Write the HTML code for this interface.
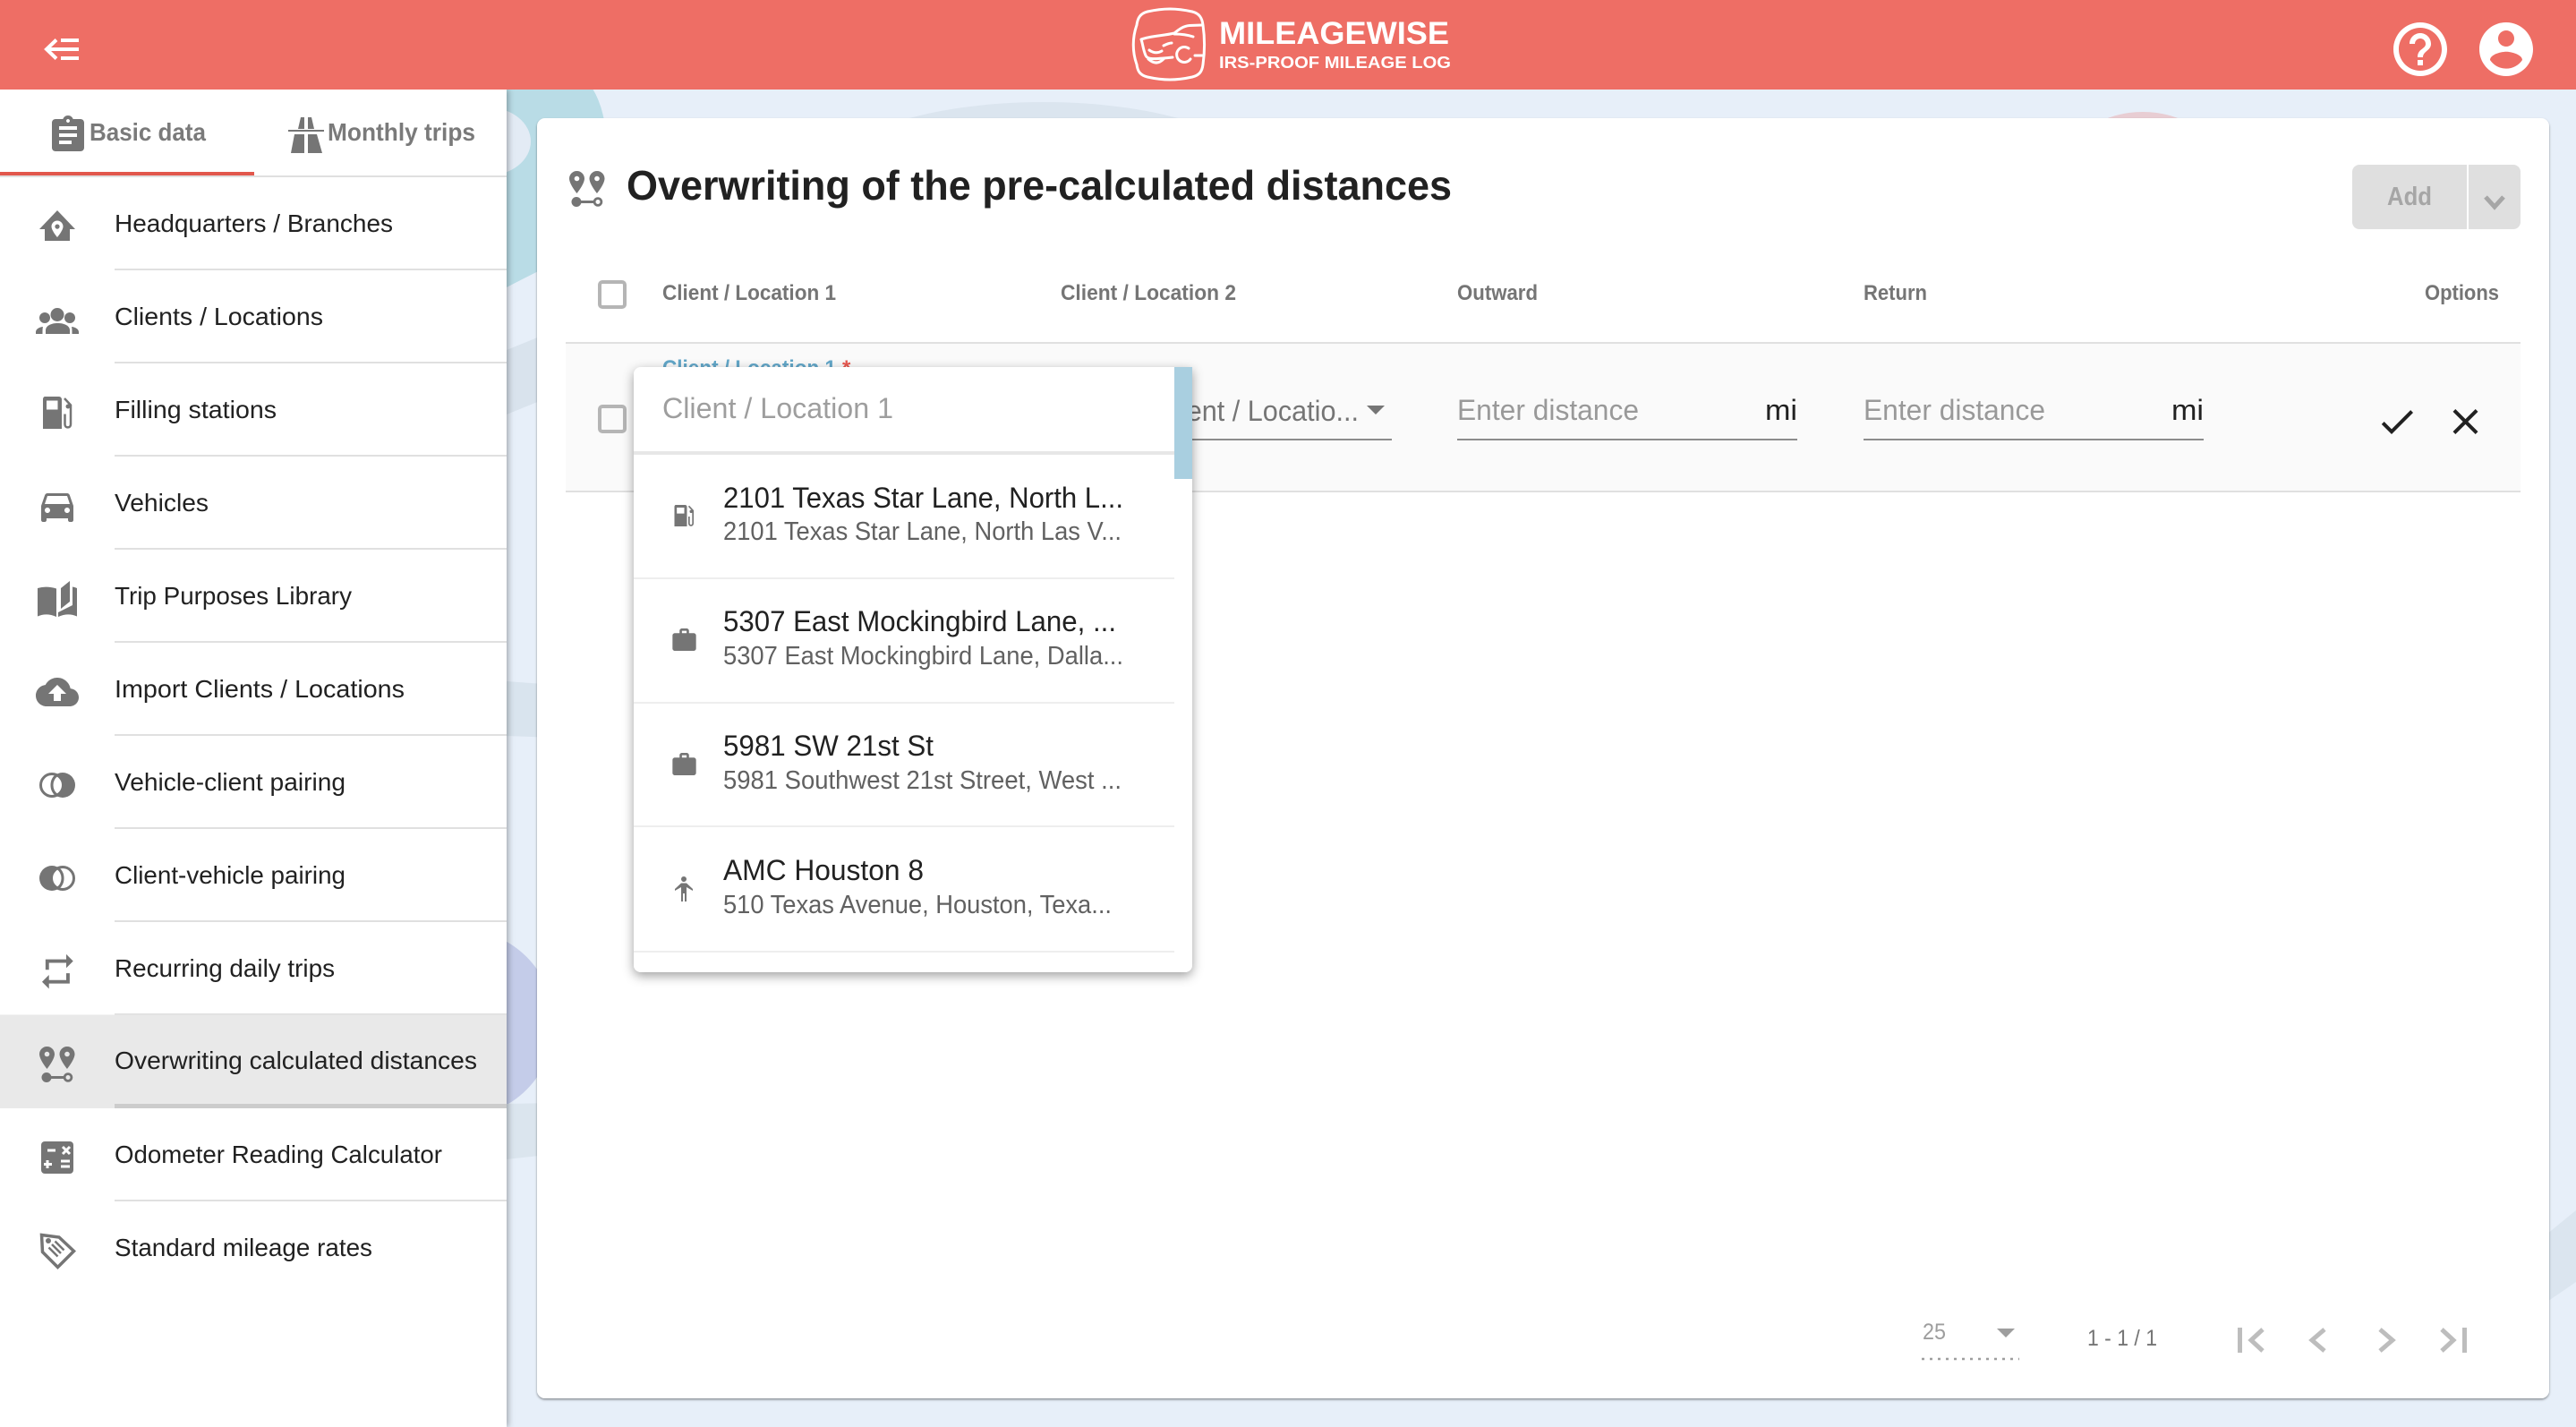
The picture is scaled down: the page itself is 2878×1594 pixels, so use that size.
<!DOCTYPE html>
<html lang="en">
<head>
<meta charset="utf-8">
<title>Overwriting of the pre-calculated distances</title>
<style>
html,body{margin:0;padding:0;background:#e7eff9;width:2878px;height:1594px;overflow:hidden}
svg{display:block}
text{font-family:"Liberation Sans",Arial,sans-serif;}
.nav{font-size:28px;fill:#212121}
.th{font-size:24px;font-weight:700;fill:#757575}
.tab{font-size:28px;font-weight:700;fill:#7a7a7a}
.t1{font-size:32px;fill:#212121}
.t2{font-size:29px;fill:#616161}
.ph{font-size:32px;fill:#999}
.ic{fill:#757575}
</style>
</head>
<body>
<svg xmlns="http://www.w3.org/2000/svg" width="2878" height="1594" viewBox="0 0 2878 1594">
<defs>
<filter id="sb" x="-5%" y="-5%" width="115%" height="110%"><feDropShadow dx="2" dy="0" stdDeviation="3.5" flood-color="#000" flood-opacity=".3"/></filter>
<filter id="cd" x="-2%" y="-2%" width="104%" height="104%"><feDropShadow dx="0" dy="1.5" stdDeviation="1.4" flood-color="#000" flood-opacity=".42"/></filter>
<filter id="dd" x="-8%" y="-8%" width="116%" height="116%"><feDropShadow dx="0" dy="4" stdDeviation="6" flood-color="#000" flood-opacity=".38"/></filter>
<symbol id="pins" viewBox="0 0 40 40" width="40" height="40" overflow="visible">
  <path fill-rule="evenodd" d="M8.5 0C3.8 0 0 3.8 0 8.5 0 14.5 8.5 25 8.5 25S17 14.5 17 8.5C17 3.8 13.2 0 8.5 0ZM8.5 5.7a2.800 2.800 0 1 1-.01 0Z"/>
  <path fill-rule="evenodd" d="M31 0C26.300 0 22.500 3.800 22.500 8.500 22.500 14.500 31 25 31 25S39.500 14.500 39.500 8.500C39.500 3.800 35.700 0 31 0ZM31 5.700a2.800 2.800 0 1 1-.01 0Z"/>
  <circle cx="8" cy="34.500" r="5.500"/>
  <path d="M8 34.500H29" stroke="#757575" stroke-width="3" fill="none"/>
  <circle cx="32" cy="34.500" r="3.900" fill="none" stroke="#757575" stroke-width="2.800"/>
</symbol>
<symbol id="gas" viewBox="0 0 33 36" overflow="visible">
  <path fill-rule="evenodd" d="M2 0H18C19.500 0 21 1.500 21 3V36H0V3C0 1.500 1 0 2 0ZM4 4.500V14.500H16.500V4.500Z"/>
  <path d="M24 2L31 9.500V31C31 35.500 24.500 35.500 24.500 31V19.500" fill="none" stroke="#757575" stroke-width="2.500"/>
  <circle cx="28" cy="11" r="2.500"/>
</symbol>
<symbol id="work" viewBox="2 2 20 19" overflow="visible">
  <path d="M20 6h-4V4c0-1.110-.89-2-2-2h-4c-1.110 0-2 .89-2 2v2H4c-1.110 0-1.990.89-1.990 2L2 19c0 1.110.89 2 2 2h16c1.110 0 2-.89 2-2V8c0-1.110-.89-2-2-2zm-6 0h-4V4h4v2z"/>
</symbol>
</defs>

<!-- background -->
<rect width="2878" height="1594" fill="#e7eff9"/>
<path d="M566 99H662Q672 115 676 140V272Q640 282 566 321Z" fill="#b9dce6"/>
<ellipse cx="545" cy="158" rx="48" ry="38" fill="#e3ebf5"/>
<path d="M566 391L620 369V441L566 463Z" fill="#d9e3ed"/>
<path d="M566 761L620 765V824L566 822Z" fill="#d9e4ee"/>
<circle cx="514" cy="1143" r="105" fill="#c4cce9"/>
<path d="M566 1233L620 1232V1289L566 1295Z" fill="#dbe5ee"/>
<ellipse cx="1166" cy="200" rx="245" ry="86" fill="#dbe5ef"/>
<ellipse cx="2394" cy="180" rx="80" ry="55" fill="#e8cdd3"/>
<path d="M2840 1383L2878 1352V1432L2840 1458Z" fill="#dbe5ef"/>

<!-- card -->
<rect x="600" y="132" width="2248" height="1430" rx="9" fill="#fff" filter="url(#cd)"/>

<!-- title -->
<use href="#pins" x="636" y="191" class="ic"/>
<text x="700" y="223" font-size="46" font-weight="700" fill="#212121" textLength="922" lengthAdjust="spacingAndGlyphs">Overwriting of the pre-calculated distances</text>

<!-- add button -->
<path d="M2636 184H2756V256H2636A8 8 0 0 1 2628 248V192A8 8 0 0 1 2636 184Z" fill="#dfdfdf"/>
<path d="M2758 184H2808A8 8 0 0 1 2816 192V248A8 8 0 0 1 2808 256H2758Z" fill="#dfdfdf"/>
<text x="2667" y="229" font-size="29" font-weight="700" fill="#a6a6a6" textLength="50" lengthAdjust="spacingAndGlyphs">Add</text>
<path d="M2777 220L2787 231L2797 220" fill="none" stroke="#a6a6a6" stroke-width="5"/>

<!-- table head -->
<rect x="670" y="315" width="28" height="28" rx="3" fill="none" stroke="#b5b5b5" stroke-width="4"/>
<text class="th" x="740" y="335" textLength="194" lengthAdjust="spacingAndGlyphs">Client / Location 1</text>
<text class="th" x="1185" y="335" textLength="196" lengthAdjust="spacingAndGlyphs">Client / Location 2</text>
<text class="th" x="1628" y="335" textLength="90" lengthAdjust="spacingAndGlyphs">Outward</text>
<text class="th" x="2082" y="335" textLength="71" lengthAdjust="spacingAndGlyphs">Return</text>
<text class="th" x="2709" y="335" textLength="83" lengthAdjust="spacingAndGlyphs">Options</text>
<rect x="632" y="382" width="2184" height="2" fill="#e0e0e0"/>

<!-- edit row -->
<rect x="632" y="384" width="2184" height="164" fill="#fafafa"/>
<rect x="632" y="548" width="2184" height="2" fill="#e0e0e0"/>
<rect x="670" y="454" width="28" height="28" rx="3" fill="none" stroke="#b5b5b5" stroke-width="4"/>
<text x="740" y="419" font-size="24" font-weight="700" fill="#62a6c8" textLength="194" lengthAdjust="spacingAndGlyphs">Client / Location 1</text>
<text x="941" y="419" font-size="24" font-weight="700" fill="#e8584f">*</text>
<text x="1290" y="470" font-size="32" fill="#757575" textLength="228" lengthAdjust="spacingAndGlyphs">Client / Locatio...</text>
<path d="M1527 453H1547L1537 463Z" fill="#757575"/>
<rect x="1185" y="490" width="370" height="2" fill="#8c8c8c"/>
<text class="ph" x="1628" y="469" textLength="203" lengthAdjust="spacingAndGlyphs">Enter distance</text>
<text class="t1" x="1972" y="469" textLength="36" lengthAdjust="spacingAndGlyphs">mi</text>
<rect x="1628" y="490" width="380" height="2" fill="#8c8c8c"/>
<text class="ph" x="2082" y="469" textLength="203" lengthAdjust="spacingAndGlyphs">Enter distance</text>
<text class="t1" x="2426" y="469" textLength="36" lengthAdjust="spacingAndGlyphs">mi</text>
<rect x="2082" y="490" width="380" height="2" fill="#8c8c8c"/>
<path transform="translate(2654 447) scale(2)" fill="#212121" d="M9 16.170L4.830 12l-1.420 1.410L9 19 21 7l-1.410-1.410z"/>
<path transform="translate(2730.500 447) scale(2)" fill="#212121" d="M19 6.410L17.590 5 12 10.590 6.410 5 5 6.410 10.590 12 5 17.590 6.410 19 12 13.410 17.590 19 19 17.590 13.410 12z"/>

<!-- pagination -->
<text x="2148" y="1496" font-size="25" fill="#9e9e9e" textLength="26" lengthAdjust="spacingAndGlyphs">25</text>
<path d="M2231 1484H2251L2241 1494Z" fill="#9e9e9e"/>
<path d="M2147 1518H2256" stroke="#9e9e9e" stroke-width="2.500" stroke-dasharray="3 6" fill="none"/>
<text x="2332" y="1503" font-size="25" fill="#757575" textLength="78" lengthAdjust="spacingAndGlyphs">1 - 1 / 1</text>
<g fill="none" stroke="#bdbdbd" stroke-width="5">
  <path d="M2502.500 1483V1511M2528 1485L2515 1497L2528 1509"/>
  <path d="M2597 1485L2583 1497L2597 1509"/>
  <path d="M2659 1485L2673 1497L2659 1509"/>
  <path d="M2728 1485L2741 1497L2728 1509M2753.500 1483V1511"/>
</g>

<!-- dropdown -->
<g filter="url(#dd)"><path d="M716 410H1332V1078A8 8 0 0 1 1324 1086H716A8 8 0 0 1 708 1078V418A8 8 0 0 1 716 410Z" fill="#fff"/></g>
<rect x="1312" y="410" width="20" height="125" fill="#a9cfe0"/>
<text x="740" y="467" font-size="32" fill="#9e9e9e" textLength="258" lengthAdjust="spacingAndGlyphs">Client / Location 1</text>
<rect x="708" y="504" width="604" height="4" fill="#e7e7e7"/>

<use href="#gas" x="753" y="564" width="23" height="24" class="ic"/>
<text class="t1" x="808" y="567" textLength="447" lengthAdjust="spacingAndGlyphs">2101 Texas Star Lane, North L...</text>
<text class="t2" x="808" y="603" textLength="445" lengthAdjust="spacingAndGlyphs">2101 Texas Star Lane, North Las V...</text>
<rect x="708" y="645" width="604" height="2" fill="#eee"/>

<use href="#work" x="751" y="702" width="27" height="25" class="ic"/>
<text class="t1" x="808" y="705" textLength="439" lengthAdjust="spacingAndGlyphs">5307 East Mockingbird Lane, ...</text>
<text class="t2" x="808" y="742" textLength="447" lengthAdjust="spacingAndGlyphs">5307 East Mockingbird Lane, Dalla...</text>
<rect x="708" y="784" width="604" height="2" fill="#eee"/>

<use href="#work" x="751" y="841" width="27" height="25" class="ic"/>
<text class="t1" x="808" y="844" textLength="235" lengthAdjust="spacingAndGlyphs">5981 SW 21st St</text>
<text class="t2" x="808" y="881" textLength="445" lengthAdjust="spacingAndGlyphs">5981 Southwest 21st Street, West ...</text>
<rect x="708" y="922" width="604" height="2" fill="#eee"/>

<g class="ic"><circle cx="764" cy="982" r="3"/><path d="M761 986.500H767L774 993V995L767 991V1007H765V998H763V1007H761V991L754 995V993Z"/></g>
<text class="t1" x="808" y="983" textLength="224" lengthAdjust="spacingAndGlyphs">AMC Houston 8</text>
<text class="t2" x="808" y="1020" textLength="434" lengthAdjust="spacingAndGlyphs">510 Texas Avenue, Houston, Texa...</text>
<rect x="708" y="1062" width="604" height="2" fill="#eee"/>

<!-- sidebar -->
<rect x="0" y="100" width="566" height="1494" fill="#fff" filter="url(#sb)"/>
<rect x="0" y="192" width="284" height="4" fill="#e2574c"/>
<rect x="0" y="196" width="566" height="2" fill="#e0e0e0"/>
<path class="ic" transform="translate(52 127) scale(2)" d="M19 3h-4.180C14.400 1.840 13.300 1 12 1c-1.300 0-2.400.84-2.820 2H5c-1.100 0-2 .9-2 2v14c0 1.100.9 2 2 2h14c1.100 0 2-.9 2-2V5c0-1.100-.9-2-2-2zm-7 0c.55 0 1 .45 1 1s-.45 1-1 1-1-.45-1-1 .45-1 1-1zm2 14H7v-2h7v2zm3-4H7v-2h10v2zm0-4H7V7h10v2z"/>
<text class="tab" x="100" y="157" textLength="130" lengthAdjust="spacingAndGlyphs">Basic data</text>
<path class="ic" d="M336 131H340V144H333ZM344 131H348L351 144H344ZM322 145H362V147H322ZM329 150H340V171H325ZM344 150H354L360 171H344Z"/>
<text class="tab" x="366" y="157" textLength="165" lengthAdjust="spacingAndGlyphs">Monthly trips</text>

<g fill="#e0e0e0">
  <rect x="128" y="300" width="438" height="2"/>
  <rect x="128" y="404" width="438" height="2"/>
  <rect x="128" y="508" width="438" height="2"/>
  <rect x="128" y="612" width="438" height="2"/>
  <rect x="128" y="716" width="438" height="2"/>
  <rect x="128" y="820" width="438" height="2"/>
  <rect x="128" y="924" width="438" height="2"/>
  <rect x="128" y="1028" width="438" height="2"/>
  <rect x="128" y="1132" width="438" height="2"/>
  <rect x="128" y="1340" width="438" height="2"/>
</g>
<rect x="0" y="1133.500" width="566" height="104.500" fill="#e9e9e9"/>
<rect x="128" y="1233" width="438" height="5" fill="#ccc"/>

<!-- nav icons -->
<path class="ic" fill-rule="evenodd" d="M64 235L84 256H78V269H50V256H44ZM64 246.500C60.500 246.500 57.500 249.400 57.500 253 57.500 257.500 64 265 64 265S70.500 257.500 70.500 253C70.500 249.400 67.500 246.500 64 246.500ZM64 250.500A2.600 2.600 0 1 1 63.990 250.500Z"/>
<g class="ic">
  <circle cx="64" cy="351.500" r="7.500"/><circle cx="50" cy="355" r="6"/><circle cx="78" cy="355" r="6"/>
  <path d="M51 373V369C51 364 57 361 64.500 361S78 364 78 369V373Z"/>
  <path d="M40 373V371C40 368 43 365.500 48 365 47.500 367 47.500 369 47.500 373Z"/>
  <path d="M88 373V371C88 368 85 365.500 80 365 80.500 367 80.500 369 80.500 373Z"/>
</g>
<use href="#gas" x="48" y="443" width="33" height="36" class="ic"/>
<path class="ic" transform="translate(40 541) scale(2)" d="M18.920 6.010C18.720 5.420 18.160 5 17.500 5h-11c-.66 0-1.210.42-1.420 1.010L3 12v8c0 .55.45 1 1 1h1c.55 0 1-.45 1-1v-1h12v1c0 .55.45 1 1 1h1c.55 0 1-.45 1-1v-8l-2.080-5.990zM6.500 16c-.83 0-1.500-.67-1.500-1.500S5.670 13 6.500 13s1.500.67 1.500 1.500S7.330 16 6.500 16zm11 0c-.83 0-1.500-.67-1.500-1.500s.67-1.500 1.500-1.500 1.500.67 1.500 1.500-.67 1.500-1.500 1.500zM5 11l1.500-4.500h11L19 11H5z"/>
<path class="ic" d="M42 657Q52 654 63 657.500V689Q52 684 42 688.500ZM68 657L78 649V672L68 680ZM81 655.500Q84 656 86 657V688.500Q76 684 65 689V684Q73 680 81 676Z"/>
<path class="ic" transform="translate(40 749) scale(2)" d="M19.350 10.040C18.670 6.590 15.640 4 12 4 9.110 4 6.600 5.640 5.350 8.040 2.340 8.360 0 10.910 0 14c0 3.310 2.690 6 6 6h13c2.760 0 5-2.240 5-5 0-2.640-2.050-4.780-4.650-4.960zM14 13v4h-4v-4H7l5-5 5 5h-3z"/>
<g>
  <circle cx="70" cy="877" r="14" fill="#757575"/>
  <circle cx="58" cy="877" r="12.500" fill="#fff" stroke="#757575" stroke-width="3"/>
  <path d="M64 865.500A14 14 0 0 0 64 888.500" fill="none" stroke="#757575" stroke-width="3"/>
</g>
<g>
  <circle cx="58" cy="981" r="14" fill="#757575"/>
  <circle cx="70" cy="981" r="12.500" fill="#fff" stroke="#757575" stroke-width="3"/>
  <path d="M64 969.500A14 14 0 0 1 64 992.500" fill="none" stroke="#757575" stroke-width="3"/>
</g>
<path class="ic" transform="translate(41.200 1062) scale(1.930)" d="M7 7h10v3l4-4-4-4v3H5v6h2V7zm10 10H7v-3l-4 4 4 4v-3h12v-6h-2v4z"/>
<use href="#pins" x="44" y="1169" class="ic"/>
<rect x="46" y="1275" width="36" height="36" rx="4" class="ic"/>
<g stroke="#fff" stroke-width="3" fill="none">
  <path d="M53 1285H62M70 1281L78 1289M78 1281L70 1289M53 1296V1305M49 1300.500H58M68 1297H78M68 1303H78"/>
</g>
<g fill="none" stroke="#757575" stroke-width="3.500">
  <path d="M46.500 1379.500L66 1382L82.500 1397.500L64.500 1415.500L47.500 1398.500Z"/>
  <path d="M54.500 1393.500L64.500 1403.500M58 1390L68 1400M61.500 1386.500L71.500 1396.500" stroke-width="2.500"/>
</g>
<circle class="ic" cx="54" cy="1386" r="3"/>

<!-- nav text -->
<text class="nav" x="128" y="259" textLength="311" lengthAdjust="spacingAndGlyphs">Headquarters / Branches</text>
<text class="nav" x="128" y="363" textLength="233" lengthAdjust="spacingAndGlyphs">Clients / Locations</text>
<text class="nav" x="128" y="467" textLength="181" lengthAdjust="spacingAndGlyphs">Filling stations</text>
<text class="nav" x="128" y="571" textLength="105" lengthAdjust="spacingAndGlyphs">Vehicles</text>
<text class="nav" x="128" y="675" textLength="265" lengthAdjust="spacingAndGlyphs">Trip Purposes Library</text>
<text class="nav" x="128" y="779" textLength="324" lengthAdjust="spacingAndGlyphs">Import Clients / Locations</text>
<text class="nav" x="128" y="883" textLength="258" lengthAdjust="spacingAndGlyphs">Vehicle-client pairing</text>
<text class="nav" x="128" y="987" textLength="258" lengthAdjust="spacingAndGlyphs">Client-vehicle pairing</text>
<text class="nav" x="128" y="1091" textLength="246" lengthAdjust="spacingAndGlyphs">Recurring daily trips</text>
<text class="nav" x="128" y="1194" textLength="405" lengthAdjust="spacingAndGlyphs">Overwriting calculated distances</text>
<text class="nav" x="128" y="1299" textLength="366" lengthAdjust="spacingAndGlyphs">Odometer Reading Calculator</text>
<text class="nav" x="128" y="1403" textLength="288" lengthAdjust="spacingAndGlyphs">Standard mileage rates</text>

<!-- header -->
<rect x="0" y="0" width="2878" height="100" fill="#ee6e65"/>
<g fill="none" stroke="#fff" stroke-width="4">
  <path d="M63 44.500L52 55L63 65.500M52 55H88M68 45H88M68 65H88"/>
</g>
<g fill="none" stroke="#fff" stroke-width="3" stroke-linecap="round" stroke-linejoin="round">
  <path d="M1282 13C1300 9 1314 9 1332 13 1340 15 1343 20 1344 28 1346 42 1346 58 1344 72 1343 80 1340 84 1332 86 1314 90 1300 90 1282 86 1274 84 1271 80 1270 72 1265 58 1265 42 1270 28 1271 20 1274 15 1282 13Z"/>
  <path d="M1275 44C1285 40 1300 40 1312 37 1317 33 1322 29 1329 28.500L1343 28"/>
  <path d="M1312 38Q1324 38 1333 41"/>
  <path d="M1275 44C1277 50 1277 55 1280 62 1282 67 1290 66 1310 64"/>
  <path d="M1284 56Q1291 61 1298 57M1300 51Q1306 48 1309 48"/>
  <path d="M1283 66Q1292 74 1300 66"/>
  <path d="M1328 54A8.500 8.500 0 1 0 1330 66"/>
  <path d="M1335 62H1344"/>
</g>
<text x="1362" y="49" font-size="35" font-weight="700" fill="#fff" textLength="257" lengthAdjust="spacingAndGlyphs">MILEAGEWISE</text>
<text x="1362" y="76" font-size="18" font-weight="700" fill="#fff" textLength="259" lengthAdjust="spacingAndGlyphs">IRS-PROOF MILEAGE LOG</text>
<path fill="#fff" transform="translate(2668 19) scale(3)" d="M11 18h2v-2h-2v2zm1-16C6.480 2 2 6.480 2 12s4.480 10 10 10 10-4.480 10-10S17.520 2 12 2zm0 18c-4.410 0-8-3.590-8-8s3.590-8 8-8 8 3.590 8 8-3.590 8-8 8zm0-14c-2.210 0-4 1.790-4 4h2c0-1.100.9-2 2-2s2 .9 2 2c0 2-3 1.750-3 5h2c0-2.250 3-2.500 3-5 0-2.210-1.790-4-4-4z"/>
<path fill="#fff" transform="translate(2764 19) scale(3)" d="M12 2C6.480 2 2 6.480 2 12s4.480 10 10 10 10-4.480 10-10S17.520 2 12 2zm0 3c1.660 0 3 1.340 3 3s-1.340 3-3 3-3-1.340-3-3 1.340-3 3-3zm0 14.200c-2.500 0-4.710-1.280-6-3.220.03-1.990 4-3.080 6-3.080 1.990 0 5.970 1.090 6 3.080-1.290 1.940-3.500 3.220-6 3.220z"/>
</svg>
</body>
</html>
